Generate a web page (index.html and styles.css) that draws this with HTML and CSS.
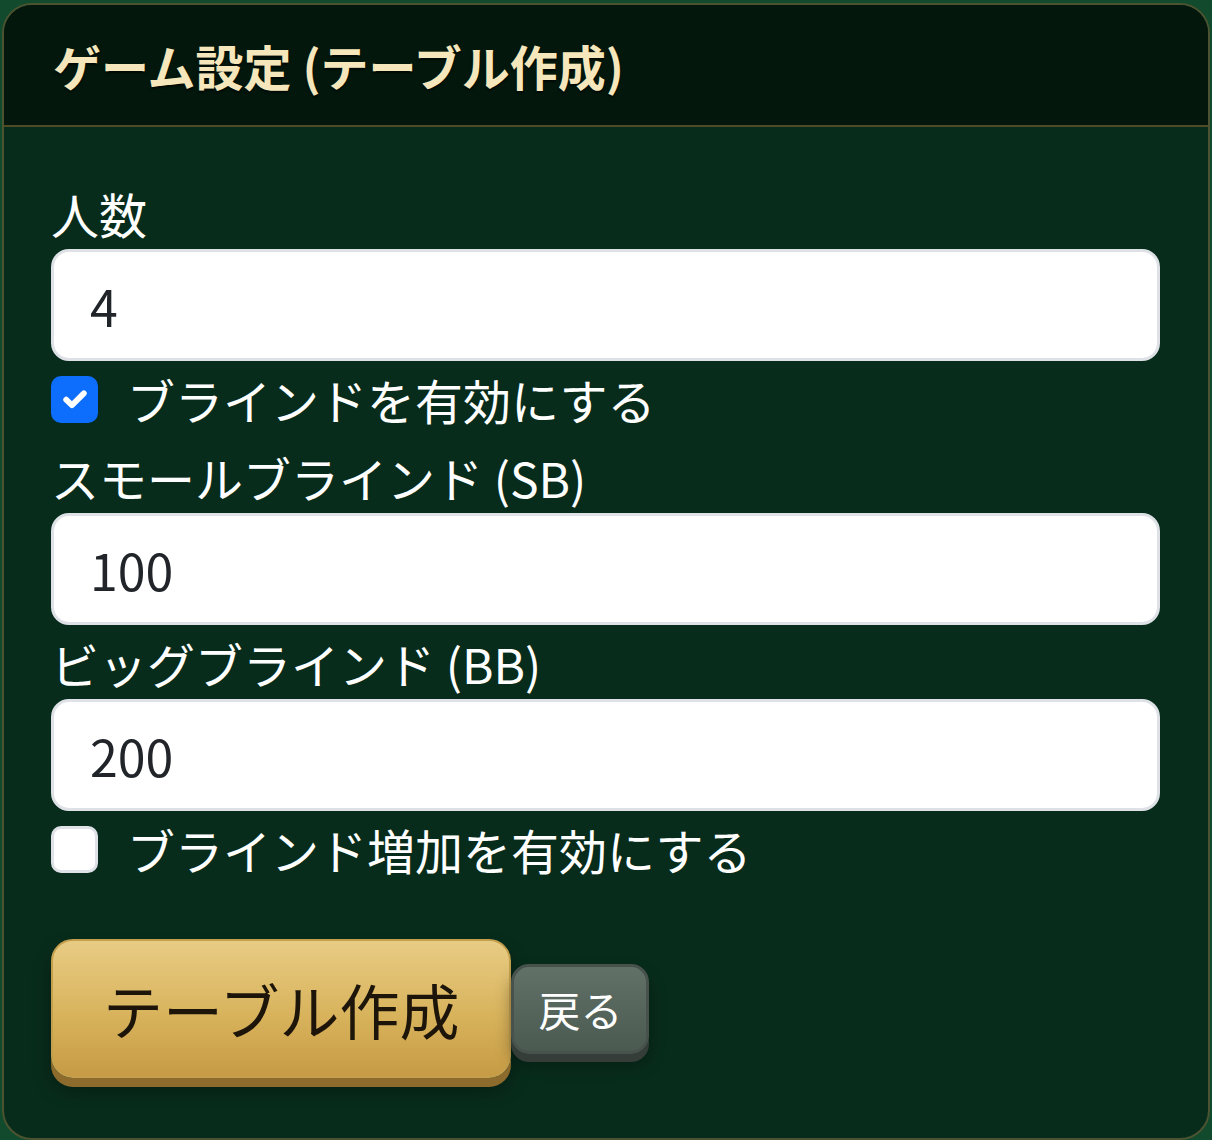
FILE: index.html
```html
<!DOCTYPE html>
<html lang="ja">
<head>
    <meta charset="utf-8">
    <title>ゲーム設定</title>
    <link rel="stylesheet" href="styles.css">
</head>
<body>
    <div class="card">
        <div class="card-header">
            <h1 class="card-title">ゲーム設定 (テーブル作成)</h1>
        </div>
        <form class="card-body" id="settingsForm">
            <label class="form-label" for="players">人数</label>
            <input class="form-control" type="number" id="players" value="4">

            <label class="form-check">
                <span class="check-box checked">
                    <svg viewBox="0 0 20 20" width="34" height="34"><path d="M4.8 10.4l3.4 3.3 7-7" fill="none" stroke="#fff" stroke-width="3.4" stroke-linecap="round" stroke-linejoin="round"/></svg>
                </span>
                <span class="check-text">ブラインドを有効にする</span>
            </label>

            <label class="form-label" for="sb">スモールブラインド (SB)</label>
            <input class="form-control" type="number" id="sb" value="100">

            <label class="form-label" for="bb">ビッグブラインド (BB)</label>
            <input class="form-control" type="number" id="bb" value="200">

            <label class="form-check">
                <span class="check-box"></span>
                <span class="check-text">ブラインド増加を有効にする</span>
            </label>

            <div class="actions">
                <button type="button" class="btn btn-gold">テーブル作成</button>
                <button type="button" class="btn btn-back">戻る</button>
            </div>
        </form>
    </div>
</body>
</html>
```

FILE: styles.css
```css
html, body {
    margin: 0;
    padding: 0;
}
body {
    background-color: #114a2c;
    font-family: "Noto Sans CJK JP", "Noto Sans", sans-serif;
    color: #fff;
    padding: 3px 2px 2px 2px;
}
.card {
    background-color: #082c1c;
    border: 2px solid #4b5330;
    border-radius: 30px;
    overflow: hidden;
}
.card-header {
    background-color: #03170d;
    border-bottom: 2px solid #4f4c25;
    padding: 29px 47px 29px 49px;
}
.card-title {
    margin: 0;
    font-size: 48px;
    line-height: 62px;
    font-weight: 700;
    color: #f6e6bb;
    text-shadow: 0 2px 2px rgba(0, 0, 0, 0.6);
}
.card-body {
    display: flex;
    flex-direction: column;
    padding: 50px 48px 52px 47px;
}
.form-label {
    display: block;
    font-size: 48px;
    line-height: 72px;
    margin-top: 2px;
}
.card-body > .form-label:first-child {
    margin-top: 0;
}
.form-control {
    box-sizing: border-box;
    flex: none;
    width: 100%;
    height: 112px;
    margin: 0;
    padding: 0 36px;
    font-family: "Noto Sans CJK JP", "Noto Sans", sans-serif;
    font-size: 50px;
    color: #212529;
    background-color: #fff;
    border: 3px solid #dee2e6;
    border-radius: 18px;
    outline: none;
    -moz-appearance: textfield;
}
.form-control::-webkit-inner-spin-button,
.form-control::-webkit-outer-spin-button {
    -webkit-appearance: none;
    margin: 0;
}
.form-check {
    display: flex;
    align-items: center;
    gap: 29px;
    height: 72px;
    flex: none;
    margin: 2px 0 4px 0;
    font-size: 48px;
}
.check-box {
    box-sizing: border-box;
    width: 47px;
    height: 47px;
    flex: none;
    border-radius: 10px;
    background-color: #fff;
    border: 3px solid #dee2e6;
    display: flex;
    align-items: center;
    justify-content: center;
}
.check-box.checked {
    background-color: #0d6efd;
    border-color: #0d6efd;
}
.actions {
    display: flex;
    align-items: center;
    margin-top: 50px;
    padding-bottom: 8px;
}
.btn {
    font-family: "Noto Sans CJK JP", "Noto Sans", sans-serif;
    cursor: pointer;
}
.btn-gold {
    height: 139px;
    padding: 0 50px;
    font-size: 60px;
    color: #1d150a;
    background: linear-gradient(180deg, #e8cc84 0%, #d8b35c 55%, #c79b45 100%);
    border: 2px solid #c4a04e;
    border-radius: 22px;
    box-shadow: 0 9px 0 #8d6b2d, 0 12px 18px rgba(0, 0, 0, 0.35);
}
.btn-back {
    height: 90px;
    padding: 0 24px;
    font-size: 42px;
    color: #fff;
    background: linear-gradient(180deg, #617168 0%, #4b5a51 100%);
    border: 3px solid #47524c;
    border-radius: 18px;
    box-shadow: 0 8px 0 #343d38, 0 10px 16px rgba(0, 0, 0, 0.35);
}
```
